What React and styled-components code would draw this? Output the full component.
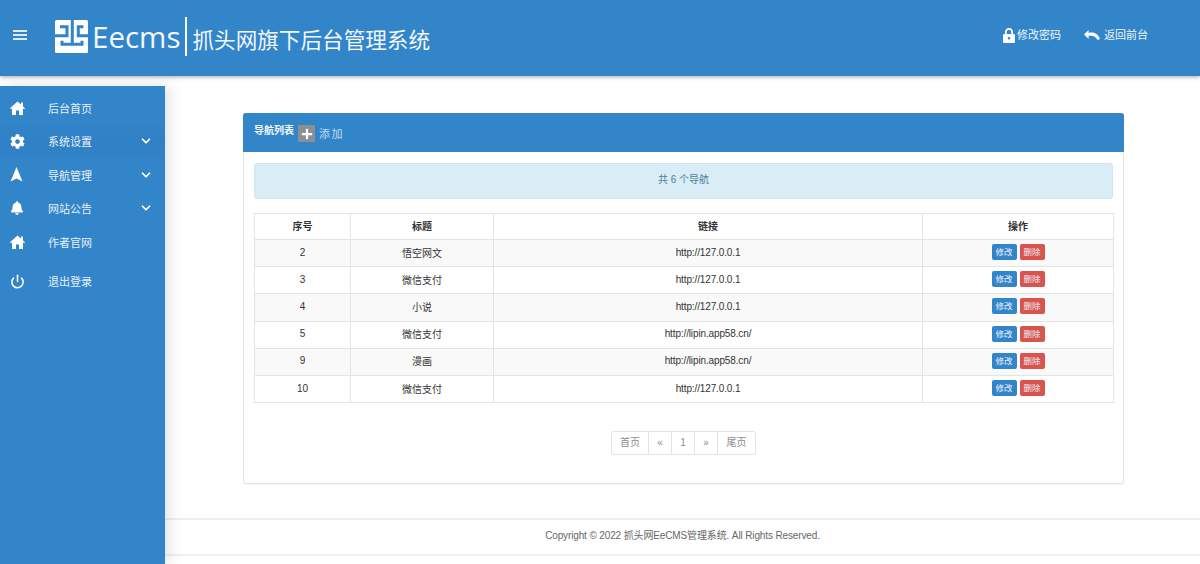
import React from "react"
import styled, { createGlobalStyle } from "styled-components"
import { FaCog, FaBell, FaPlus } from "react-icons/fa"
import { LuChevronDown, LuPower } from "react-icons/lu"

const blue = "#3385c9"
const sans = `"Liberation Sans", "Noto Sans CJK SC", sans-serif`

const GlobalStyle = createGlobalStyle`
  html, body {
    margin: 0;
    height: 564px;
    overflow: hidden;
    background: #fff;
    font-family: ${sans};
  }
`

const Page = styled.div`
  width: 1200px;
  height: 564px;
  display: flex;
  flex-direction: column;
  overflow: hidden;
`

const Header = styled.header`
  position: relative;
  z-index: 2;
  height: 76px;
  flex: none;
  background: ${blue};
  box-shadow: 0 1px 4px rgba(0, 0, 0, 0.35);
  display: flex;
  align-items: flex-start;
  color: #fff;
`

const MenuToggle = styled.div`
  width: 14px;
  margin: 30px 0 0 13px;
  display: flex;
  flex-direction: column;
  gap: 2.5px;
  span {
    height: 1.5px;
    background: #dfecf7;
  }
`

const Brand = styled.div`
  margin: 17px 0 0 28px;
  display: flex;
  align-items: flex-start;
`

const LogoBox = styled.span`
  margin-top: 3px;
  display: flex;
`

const LogoWord = styled.span`
  font-family: "Open Sans", ${sans};
  font-size: 29.5px;
  line-height: 40px;
  margin-left: 4px;
  color: #f2f7fb;
`

const LogoBar = styled.span`
  width: 2px;
  height: 39px;
  background: #fff;
  margin: 0 5px 0 5px;
`

const LogoTitle = styled.span`
  font-size: 21.6px;
  line-height: 26px;
  margin-top: 11px;
  color: #f2f7fb;
`

const HeaderLinks = styled.div`
  margin: 26px 0 0 auto;
  padding-right: 52px;
  display: flex;
  gap: 23px;
`

const HeaderLink = styled.a`
  display: flex;
  align-items: center;
  gap: ${(p) => p.$gap}px;
  font-size: 11px;
  line-height: 18px;
  color: #eef5fb;
  svg {
    color: #fff;
  }
`

const Body = styled.div`
  flex: 1;
  display: flex;
  min-height: 0;
`

const Sidebar = styled.aside`
  position: relative;
  z-index: 1;
  width: 165px;
  flex: none;
  margin-top: 10px;
  padding-top: 5px;
  background: ${blue};
  box-shadow: 4px 0 14px rgba(0, 0, 0, 0.12);
`

const NavItem = styled.a`
  height: 33.5px;
  margin-top: ${(p) => (p.$spaced ? 6 : 0)}px;
  display: flex;
  align-items: center;
  color: #e6f0f9;
  font-size: 11px;
  background: ${(p) => (p.$active ? "linear-gradient(#3283c7, #2f80c4 50%, #3283c7)" : "transparent")};
`

const NavIcon = styled.span`
  width: 48px;
  flex: none;
  padding-left: 10px;
  box-sizing: border-box;
  display: flex;
  color: #fff;
`

const NavChevron = styled(LuChevronDown)`
  margin-left: auto;
  margin-right: 12px;
  color: #fff;
`

const Main = styled.main`
  flex: 1;
  min-width: 0;
  display: flex;
  flex-direction: column;
`

const Card = styled.section`
  margin: 37px 76px 0 78px;
  height: 371px;
  box-sizing: border-box;
  border: 1px solid #e4e4e4;
  border-top: 0;
  border-radius: 3px;
  box-shadow: 0 1px 1px rgba(0, 0, 0, 0.04);
  background: #fff;
`

const CardHeading = styled.div`
  height: 39px;
  margin: 0 -1px;
  padding: 11px 0 0 11px;
  box-sizing: border-box;
  background: ${blue};
  border-radius: 3px 3px 0 0;
  display: flex;
  align-items: flex-start;
`

const CardTitle = styled.h3`
  margin: 0;
  font-size: 10px;
  line-height: 14px;
  font-weight: 700;
  color: #f3f8fc;
`

const AddIcon = styled.span`
  width: 17px;
  height: 17px;
  margin: 1px 0 0 4px;
  background: #8a8f94;
  display: flex;
  align-items: center;
  justify-content: center;
  color: #fff;
`

const AddLabel = styled.span`
  margin: 3px 0 0 4px;
  font-size: 11px;
  line-height: 15px;
  letter-spacing: 1.6px;
  color: #c3dcf0;
`

const CardBody = styled.div`
  padding: 11px 10px 0;
`

const Notice = styled.div`
  height: 36px;
  border: 1px solid #cfe6f2;
  border-radius: 3px;
  box-sizing: border-box;
  background: #d9edf7;
  color: #4a7f9c;
  font-size: 10px;
  line-height: 32px;
  text-align: center;
`

const Table = styled.table`
  width: 859px;
  margin-top: 14px;
  border-collapse: collapse;
  table-layout: fixed;
  font-size: 10px;
  color: #333;
  th, td {
    border: 1px solid #e4e4e4;
    text-align: center;
    padding: 0 0 2px;
    box-sizing: border-box;
  }
  th {
    height: 26px;
    font-weight: 700;
    padding-bottom: 3px;
  }
  td {
    height: 27.2px;
  }
  tbody tr:nth-child(odd) {
    background: #f9f9f9;
  }
`

const LinkCell = styled.td`
  letter-spacing: -0.13px;
`

const ActionButton = styled.button`
  width: 25px;
  height: 16px;
  padding: 0;
  border: 0;
  border-radius: 2px;
  margin: 0 1.5px;
  background: ${(p) => (p.$danger ? "#d9534f" : blue)};
  color: #e9f1f8;
  font-family: ${sans};
  font-size: 8.5px;
  line-height: 16px;
  vertical-align: middle;
`

const Pager = styled.nav`
  margin: 28px 0 0 1px;
  display: flex;
  justify-content: center;
`

const PagerItem = styled.a`
  width: ${(p) => p.$w}px;
  height: 24px;
  box-sizing: border-box;
  border: 1px solid #e3e3e3;
  margin-left: -1px;
  color: #8c8c8c;
  font-size: 10px;
  line-height: 22px;
  text-align: center;
  &:first-child {
    border-radius: 3px 0 0 3px;
  }
  &:last-child {
    border-radius: 0 3px 3px 0;
  }
`

const Footer = styled.footer`
  margin-top: 34px;
  height: 38px;
  box-sizing: border-box;
  border-top: 2px solid #eeeeee;
  border-bottom: 2px solid #f0f0f0;
  color: #666;
  font-size: 10px;
  letter-spacing: -0.13px;
  line-height: 32px;
  text-align: center;
`

const LogoMark = () => (
  <svg width="33" height="33" viewBox="0 0 33 33">
    <rect width="33" height="33" rx="1.5" fill="#fff" />
    <g fill="none" stroke={blue} strokeWidth="3">
      <path d="M5 6.7H12V15.7H0" />
      <path d="M17.3 0V24.3M7 20.7V24.3H27V20.7" />
      <path d="M33 15.7H23.3V6.7H28.5" />
    </g>
  </svg>
)

const HomeIcon = () => (
  <svg width="15" height="14" viewBox="0 0 15 14">
    <path
      d="M7.5 .5 0 7.2l.9 1 1.1-1V14h4V9.5h3V14h4V7.2l1.1 1 .9-1-2-1.8V1.5h-2v2.1z"
      fill="currentColor"
    />
  </svg>
)

const ArrowUp = () => (
  <svg width="13" height="15" viewBox="0 0 13 15">
    <path d="M6.5 0 12.5 14.5 6.5 11.5 .5 14.5z" fill="currentColor" />
  </svg>
)

const LockIcon = () => (
  <svg width="12" height="15" viewBox="0 0 12 15">
    <path
      d="M6 0C3.6 0 2 1.8 2 4v2H1a1 1 0 0 0-1 1v7a1 1 0 0 0 1 1h10a1 1 0 0 0 1-1V7a1 1 0 0 0-1-1h-1V4c0-2.2-1.6-4-4-4zm0 1.8c1.3 0 2.2.9 2.2 2.2v2H3.8V4c0-1.3.9-2.2 2.2-2.2zM6 9a1.3 1.3 0 1 1 0 2.6A1.3 1.3 0 0 1 6 9z"
      fill="currentColor"
      fillRule="evenodd"
    />
  </svg>
)

const UndoIcon = () => (
  <svg width="16" height="10" viewBox="0 0 16 10">
    <path d="M4.6 0 0 4.6 4.6 9V6C8 5.2 11.6 6 13.6 10L16 9C14.2 3.8 9.8 1.6 4.6 3z" fill="currentColor" />
  </svg>
)

const navItems = [
  { label: "后台首页", icon: <HomeIcon /> },
  { label: "系统设置", icon: <FaCog size={15} />, more: true, active: true },
  { label: "导航管理", icon: <ArrowUp />, more: true },
  { label: "网站公告", icon: <FaBell size={14} />, more: true },
  { label: "作者官网", icon: <HomeIcon /> },
  { label: "退出登录", icon: <LuPower size={15} strokeWidth={2.4} />, spaced: true },
]

const rows = [
  [2, "悟空网文", "http://127.0.0.1"],
  [3, "微信支付", "http://127.0.0.1"],
  [4, "小说", "http://127.0.0.1"],
  [5, "微信支付", "http://lipin.app58.cn/"],
  [9, "漫画", "http://lipin.app58.cn/"],
  [10, "微信支付", "http://127.0.0.1"],
]

const pages = [
  ["首页", 38],
  ["«", 24],
  ["1", 24],
  ["»", 24],
  ["尾页", 39],
]

export default function App() {
  return (
    <Page>
      <GlobalStyle />
      <Header>
        <MenuToggle>
          <span />
          <span />
          <span />
        </MenuToggle>
        <Brand>
          <LogoBox>
            <LogoMark />
          </LogoBox>
          <LogoWord>Eecms</LogoWord>
          <LogoBar />
          <LogoTitle>抓头网旗下后台管理系统</LogoTitle>
        </Brand>
        <HeaderLinks>
          <HeaderLink $gap={2}>
            <LockIcon />
            修改密码
          </HeaderLink>
          <HeaderLink $gap={4}>
            <UndoIcon />
            返回前台
          </HeaderLink>
        </HeaderLinks>
      </Header>
      <Body>
        <Sidebar>
          {navItems.map((item) => (
            <NavItem key={item.label} $active={item.active} $spaced={item.spaced}>
              <NavIcon>{item.icon}</NavIcon>
              {item.label}
              {item.more && <NavChevron size={14} strokeWidth={3} />}
            </NavItem>
          ))}
        </Sidebar>
        <Main>
          <Card>
            <CardHeading>
              <CardTitle>导航列表</CardTitle>
              <AddIcon>
                <FaPlus size={12} />
              </AddIcon>
              <AddLabel>添加</AddLabel>
            </CardHeading>
            <CardBody>
              <Notice>共 6 个导航</Notice>
              <Table>
                <colgroup>
                  <col width="96" />
                  <col width="143" />
                  <col width="429" />
                  <col width="191" />
                </colgroup>
                <thead>
                  <tr>
                    <th>序号</th>
                    <th>标题</th>
                    <th>链接</th>
                    <th>操作</th>
                  </tr>
                </thead>
                <tbody>
                  {rows.map(([id, title, link]) => (
                    <tr key={id}>
                      <td>{id}</td>
                      <td>{title}</td>
                      <LinkCell>{link}</LinkCell>
                      <td>
                        <ActionButton>修改</ActionButton>
                        <ActionButton $danger>删除</ActionButton>
                      </td>
                    </tr>
                  ))}
                </tbody>
              </Table>
              <Pager>
                {pages.map(([label, w]) => (
                  <PagerItem key={label} $w={w}>
                    {label}
                  </PagerItem>
                ))}
              </Pager>
            </CardBody>
          </Card>
          <Footer>Copyright © 2022 抓头网EeCMS管理系统. All Rights Reserved.</Footer>
        </Main>
      </Body>
    </Page>
  )
}
